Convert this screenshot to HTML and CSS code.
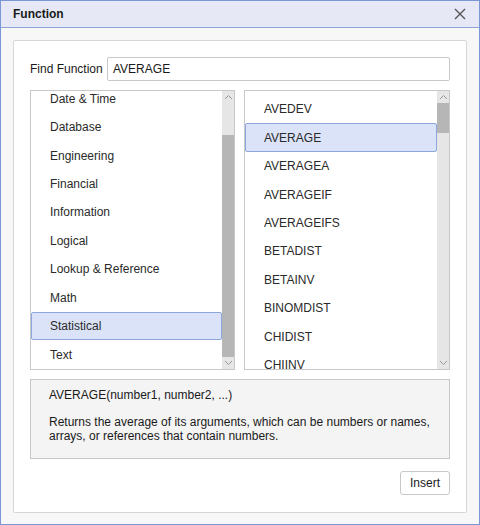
FILE: index.html
```html
<!DOCTYPE html>
<html>
<head>
<meta charset="utf-8">
<link rel="stylesheet" href="styles.css">
</head>
<body>
<div class="dialog">
  <div class="titlebar">
    <span class="title">Function</span>
    <svg class="close" width="12" height="12" viewBox="0 0 12 12"><path d="M1 1L11 11M11 1L1 11" stroke="#555" stroke-width="1.4" fill="none"/></svg>
  </div>
  <div class="body">
    <div class="panel">
      <div class="find-row">
        <label class="find-label">Find Function</label>
        <div class="find-input">AVERAGE</div>
      </div>
      <div class="lists">
        <div class="list">
          <div class="items left-items">
            <div class="item first">Date &amp; Time</div>
            <div class="item">Database</div>
            <div class="item">Engineering</div>
            <div class="item">Financial</div>
            <div class="item">Information</div>
            <div class="item">Logical</div>
            <div class="item">Lookup &amp; Reference</div>
            <div class="item">Math</div>
            <div class="item selected">Statistical</div>
            <div class="item">Text</div>
          </div>
          <div class="scrollbar">
            <div class="arrow up"><svg width="9" height="6" viewBox="0 0 9 6"><path d="M1 5L4.5 1.5L8 5" stroke="#9a9a9a" stroke-width="1" fill="none"/></svg></div>
            <div class="track"><div class="thumb left-thumb"></div></div>
            <div class="arrow down"><svg width="9" height="6" viewBox="0 0 9 6"><path d="M1 1L4.5 4.5L8 1" stroke="#9a9a9a" stroke-width="1" fill="none"/></svg></div>
          </div>
        </div>
        <div class="list">
          <div class="items right-items">
            <div class="item">AVEDEV</div>
            <div class="item selected">AVERAGE</div>
            <div class="item">AVERAGEA</div>
            <div class="item">AVERAGEIF</div>
            <div class="item">AVERAGEIFS</div>
            <div class="item">BETADIST</div>
            <div class="item">BETAINV</div>
            <div class="item">BINOMDIST</div>
            <div class="item">CHIDIST</div>
            <div class="item">CHIINV</div>
          </div>
          <div class="scrollbar">
            <div class="arrow up"><svg width="9" height="6" viewBox="0 0 9 6"><path d="M1 5L4.5 1.5L8 5" stroke="#9a9a9a" stroke-width="1" fill="none"/></svg></div>
            <div class="track"><div class="thumb right-thumb"></div></div>
            <div class="arrow down"><svg width="9" height="6" viewBox="0 0 9 6"><path d="M1 1L4.5 4.5L8 1" stroke="#9a9a9a" stroke-width="1" fill="none"/></svg></div>
          </div>
        </div>
      </div>
      <div class="desc">
        <div class="syntax">AVERAGE(number1, number2, ...)</div>
        <div class="explain">Returns the average of its arguments, which can be numbers or names, arrays, or references that contain numbers.</div>
      </div>
      <div class="actions">
        <button class="btn">Insert</button>
      </div>
    </div>
  </div>
</div>
</body>
</html>
```

FILE: styles.css
```css
* { box-sizing: border-box; }
html, body { margin: 0; padding: 0; }
body {
  font-family: "Liberation Sans", Arial, sans-serif;
  font-size: 12px;
  color: #222;
  background: #fff;
}
.dialog {
  width: 480px;
  height: 525px;
  border: 1px solid #7b96d4;
  display: flex;
  flex-direction: column;
  background: #f7f7f7;
}
.titlebar {
  height: 27px;
  background: #e6e9f5;
  border-bottom: 1px solid #8ea4d8;
  display: flex;
  align-items: center;
  justify-content: space-between;
  padding: 0 13px 0 12px;
  flex: none;
}
.title {
  font-weight: bold;
  font-size: 12px;
  color: #1a1a1a;
}
.close { display: block; }
.body {
  flex: 1;
  padding: 12px 12px 11px 12px;
  display: flex;
}
.panel {
  flex: 1;
  background: #fff;
  border: 1px solid #d6d6d6;
  border-radius: 2px;
  padding: 16px 16px 0 16px;
  display: flex;
  flex-direction: column;
}
.find-row {
  display: flex;
  align-items: center;
  height: 24px;
}
.find-label {
  width: 77px;
  color: #1a1a1a;
}
.find-input {
  flex: 1;
  height: 24px;
  border: 1px solid #c8c8c8;
  border-radius: 2px;
  padding: 0 5px;
  display: flex;
  align-items: center;
  color: #1a1a1a;
}
.lists {
  margin-top: 9px;
  display: grid;
  grid-template-columns: 205px 206px;
  column-gap: 9px;
  height: 280px;
}
.list {
  border: 1px solid #c8c8c8;
  display: flex;
  overflow: hidden;
  background: #fff;
}
.items {
  flex: 1;
  overflow: hidden;
}
.right-items { padding-top: 4px; }
.item {
  height: 28.44px;
  display: flex;
  align-items: center;
  padding-left: 18px;
  color: #2a2a2a;
  border: 1px solid transparent;
  border-radius: 2px;
}
.left-items .item.first { margin-top: -6.5px; }
.item.selected {
  background: #dae3f7;
  border-color: #8ea6de;
}
.scrollbar {
  width: 12px;
  flex: none;
  background: #e6e6e6;
  display: flex;
  flex-direction: column;
}
.arrow {
  height: 12px;
  display: flex;
  align-items: center;
  justify-content: center;
  flex: none;
}
.track {
  flex: 1;
  display: flex;
  flex-direction: column;
}
.thumb { background: #b6b6b6; }
.left-thumb { margin-top: 32px; flex: 1; margin-bottom: 0; }
.right-thumb { height: 30px; }
.desc {
  margin-top: 9px;
  height: 80px;
  background: #f4f4f4;
  border: 1px solid #c8c8c8;
  padding: 8px 18px 0 18px;
  color: #1a1a1a;
  line-height: 14px;
}
.syntax { margin-bottom: 13px; }
.actions {
  margin-top: 12px;
  display: flex;
  justify-content: flex-end;
}
.btn {
  width: 50px;
  height: 24px;
  border: 1px solid #c8c8c8;
  border-radius: 3px;
  background: #fff;
  font-family: "Liberation Sans", Arial, sans-serif;
  font-size: 12px;
  color: #1a1a1a;
  padding: 0;
}
```
